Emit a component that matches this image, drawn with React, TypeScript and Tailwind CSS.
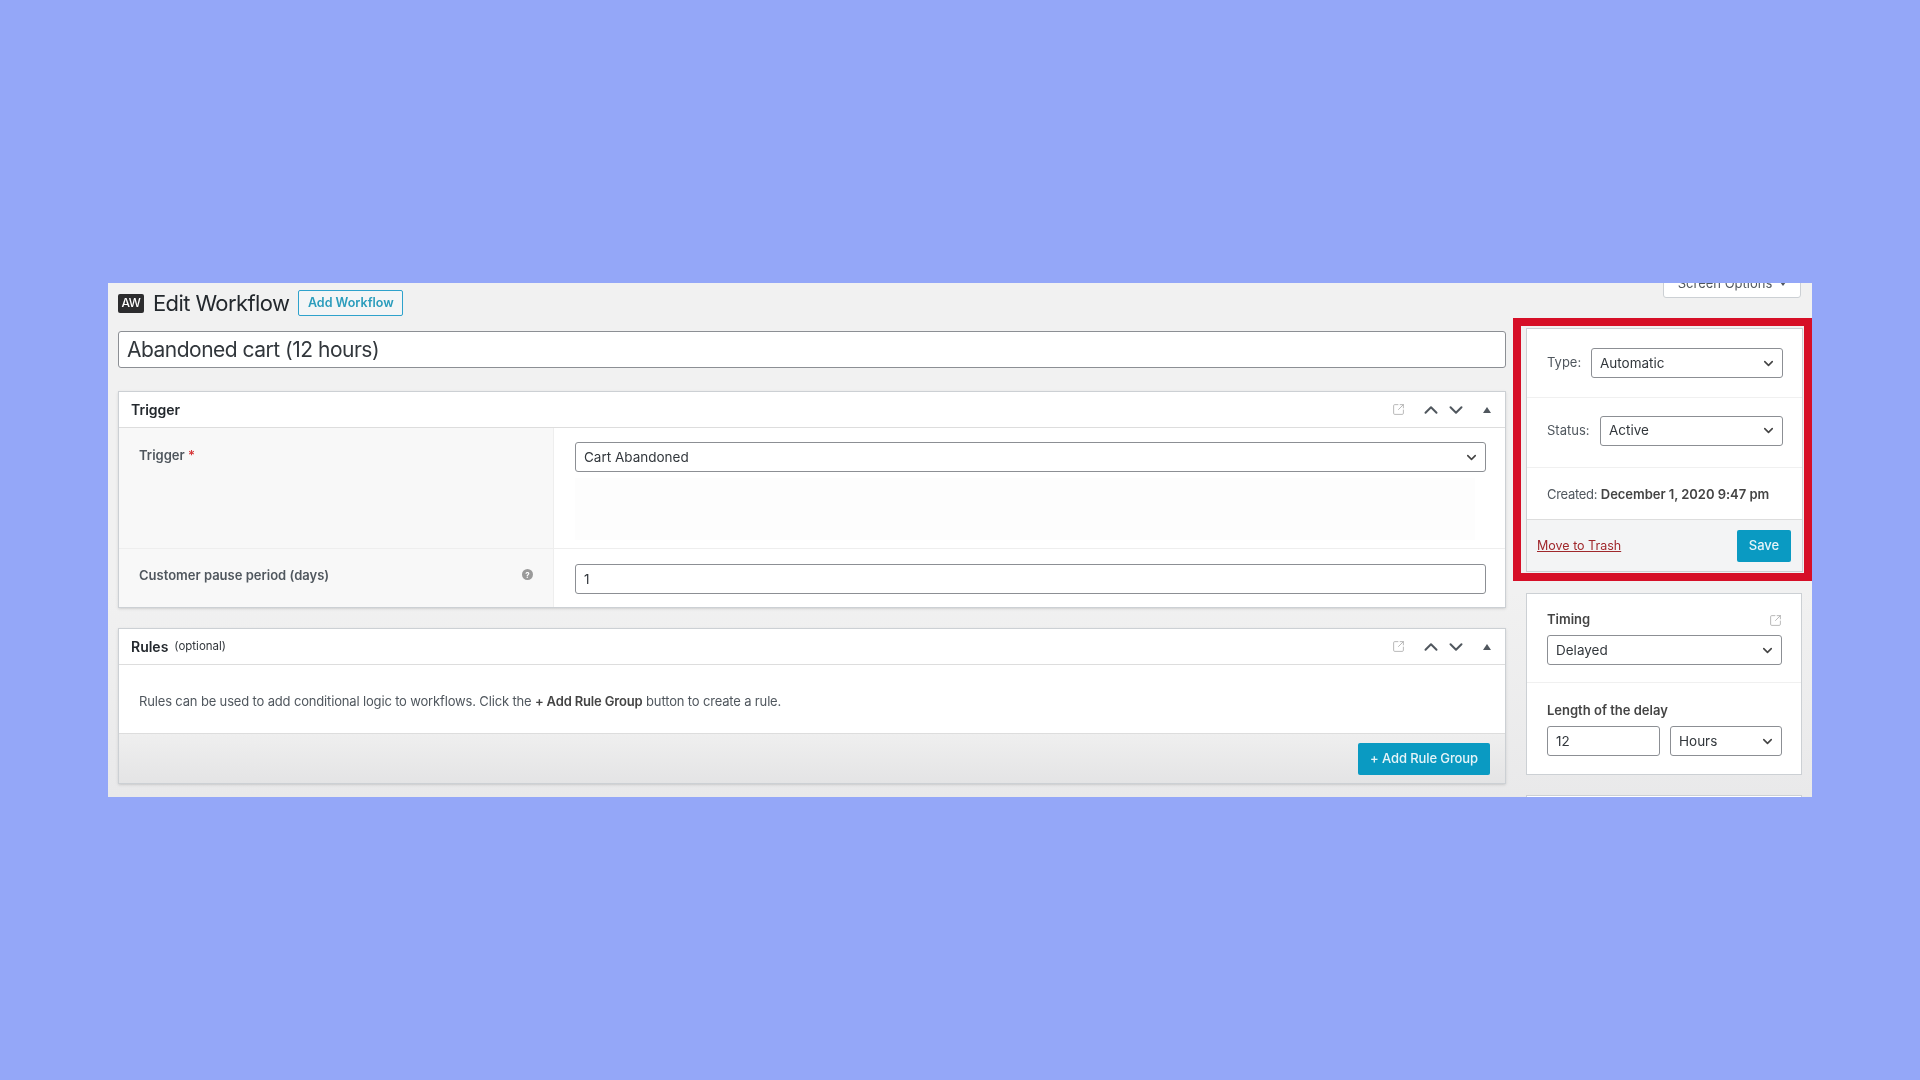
import React from "react";
import { ChevronDown, ChevronUp, SquareArrowOutUpRight } from "lucide-react";

const SelectBox = ({ value, className = "" }: { value: string; className?: string }) => (
  <div className={`flex h-[30px] items-center justify-between rounded-[3px] border border-[#8c8f94] bg-white pl-[8px] pr-[6px] text-[13.5px] text-[#32373c] ${className}`}>
    <span>{value}</span>
    <ChevronDown className="h-[15px] w-[15px] text-[#444]" strokeWidth={2.5} />
  </div>
);

const BoxControls = () => (
  <div className="ml-auto flex items-center">
    <SquareArrowOutUpRight className="mr-[15px] h-[13px] w-[13px] text-[#a9a9a9]" strokeWidth={1.5} />
    <ChevronUp className="mr-[3px] h-[22px] w-[22px] text-[#50575e]" strokeWidth={2.2} />
    <ChevronDown className="h-[22px] w-[22px] text-[#50575e]" strokeWidth={2.2} />
    <div className="ml-[16px] mr-[14px] h-0 w-0 border-x-[4px] border-b-[6px] border-x-transparent border-b-[#50575e]" />
  </div>
);

const HelpIcon = () => (
  <div className="flex h-[11px] w-[11px] items-center justify-center rounded-full bg-[#9a9a9a] text-[8px] font-bold leading-none text-white">
    ?
  </div>
);

export default function App() {
  return (
    <div className="flex h-screen w-full items-center justify-center bg-[#94a7f8] font-['Inter',sans-serif]">
      <div className="flex h-[514px] w-[1704px] overflow-hidden bg-gradient-to-b from-[#f1f1f1] from-60% to-[#e9e9ea] blur-[0.3px]">
        {/* main column */}
        <div className="ml-[10px] w-[1388px] shrink-0 pt-[7px]">
          <div className="flex h-[26px] items-center">
            <div className="flex h-[19px] w-[26px] items-center justify-center rounded-[2px] bg-[#2c2c2e] text-[12px] font-medium tracking-tight text-white">
              AW
            </div>
            <h1 className="ml-[9px] text-[22px] leading-none tracking-[-0.6px] text-[#23282d]">Edit Workflow</h1>
            <div className="ml-[9px] flex h-[26px] w-[105px] items-center justify-center rounded-[2px] border border-[#2ea2cc] bg-[#f3f5f6] text-[12.5px] font-semibold text-[#2a9cbc]">
              Add Workflow
            </div>
          </div>

          <div className="mt-[15px] flex h-[37px] items-center rounded-[3px] border border-[#8c8f94] bg-white pl-[8px] text-[21px] tracking-[-0.5px] text-[#32373c]">
            Abandoned cart (12 hours)
          </div>

          {/* trigger box */}
          <div className="mt-[23px] h-[217px] border border-[#ccd0d4] bg-white shadow-sm">
            <div className="flex h-[36px] items-center border-b border-[#ddd] pl-[12px]">
              <span className="text-[14px] font-semibold text-[#23282d]">Trigger</span>
              <BoxControls />
            </div>
            <div className="flex h-[121px] border-b border-[#eee]">
              <div className="w-[435px] shrink-0 border-r border-[#eee] bg-[#f8f8f8] pl-[20px] pt-[21px] text-[13px] font-semibold leading-none text-[#50575e]">
                Trigger <span className="text-[#d63638]">*</span>
              </div>
              <div className="flex-1 pl-[21px] pr-[19px] pt-[14px]">
                <SelectBox value="Cart Abandoned" />
                <div className="mt-[6px] h-[62px] w-[900px] bg-[#fdfdfd]" />
              </div>
            </div>
            <div className="flex h-[58px]">
              <div className="flex w-[435px] shrink-0 items-start justify-between border-r border-[#eee] bg-[#f8f8f8] pl-[20px] pr-[20px] pt-[20px] text-[13px] font-semibold leading-none text-[#50575e]">
                <span>Customer pause period (days)</span>
                <HelpIcon />
              </div>
              <div className="flex-1 pl-[21px] pr-[19px] pt-[15px]">
                <div className="flex h-[30px] items-center rounded-[3px] border border-[#8c8f94] bg-white pl-[8px] text-[13.5px] text-[#32373c]">
                  1
                </div>
              </div>
            </div>
          </div>

          {/* rules box */}
          <div className="mt-[20px] h-[156px] border border-[#ccd0d4] bg-white shadow-sm">
            <div className="flex h-[36px] items-center border-b border-[#ddd] pl-[12px]">
              <span className="text-[14px] font-semibold text-[#23282d]">Rules</span>
              <span className="ml-[6px] text-[11.5px] text-[#32373c]">(optional)</span>
              <BoxControls />
            </div>
            <div className="flex h-[68px] items-center pl-[20px] pt-[6px] text-[13px] tracking-[-0.16px] text-[#50575e]">
              <p>
                Rules can be used to add conditional logic to workflows. Click the{" "}
                <strong className="font-semibold text-[#444]">+ Add Rule Group</strong> button to create a rule.
              </p>
            </div>
            <div className="flex h-[50px] items-center justify-end border-t border-[#ddd] bg-gradient-to-b from-[#efefef] to-[#e4e4e5] pr-[15px]">
              <div className="flex h-[32px] w-[132px] items-center justify-center rounded-[2px] bg-[#0a9ac2] text-[13px] font-medium tracking-[-0.1px] text-[#e6f4f8]">
                + Add Rule Group
              </div>
            </div>
          </div>
        </div>

        {/* side column */}
        <div className="ml-[7px] flex w-[299px] shrink-0 flex-col">
          <div className="-mt-[15px] mr-[11px] flex h-[30px] w-[138px] shrink-0 items-center justify-center self-end rounded-b-[3px] border border-[#ccd0d4] bg-white pt-[2px] text-[13px] text-[#50575e]">
            Screen Options
            <span className="ml-[8px] h-0 w-0 border-x-[3px] border-t-[4px] border-x-transparent border-t-[#50575e]" />
          </div>

          <div className="mt-[20px] h-[263px] shrink-0 border-[8px] border-[#d60f27] pb-[1px] pl-[5px] pr-[1px] pt-[2px]">
            <div className="flex h-full flex-col border border-[#ccd0d4] bg-white text-[13px] text-[#50575e]">
              <div className="flex h-[69px] items-center justify-between border-b border-[#f0f0f0] pl-[20px] pr-[19px]">
                <span>Type:</span>
                <SelectBox value="Automatic" className="w-[192px]" />
              </div>
              <div className="flex h-[70px] items-center justify-between border-b border-[#f0f0f0] pb-[4px] pl-[20px] pr-[19px]">
                <span>Status:</span>
                <SelectBox value="Active" className="w-[183px]" />
              </div>
              <div className="flex h-[51px] items-center pl-[20px] pt-[2px] tracking-[-0.04px]">
                <span>
                  <span className="tracking-[-0.3px]">Created:</span>{" "}
                  <strong className="font-semibold text-[#444]">December 1, 2020 9:47 pm</strong>
                </span>
              </div>
              <div className="flex flex-1 items-center justify-between border-t border-[#ddd] bg-[#f3f4f5] pl-[10px] pr-[11px] pt-[1px]">
                <span className="text-[12.5px] text-[#a0282c] underline">Move to Trash</span>
                <div className="flex h-[32px] w-[54px] items-center justify-center rounded-[2px] bg-[#0a9ac2] text-[13px] font-medium text-[#e6f4f8]">
                  Save
                </div>
              </div>
            </div>
          </div>

          <div className="ml-[13px] mr-[10px] mt-[12px] h-[182px] shrink-0 border border-[#ccd0d4] bg-white">
            <div className="h-[89px] border-b border-[#f0f0f0] pl-[20px] pr-[19px] pt-[18px]">
              <div className="flex h-[16px] items-center justify-between text-[13px] font-semibold text-[#444]">
                <span>Timing</span>
                <SquareArrowOutUpRight className="h-[13px] w-[13px] text-[#a9a9a9]" strokeWidth={1.5} />
              </div>
              <SelectBox value="Delayed" className="mt-[7px]" />
            </div>
            <div className="pl-[20px] pr-[19px] pt-[20px]">
              <div className="flex h-[16px] items-center text-[13px] font-semibold text-[#444]">Length of the delay</div>
              <div className="mt-[7px] flex gap-[10px]">
                <div className="flex h-[30px] w-[113px] items-center rounded-[3px] border border-[#8c8f94] bg-white pl-[8px] text-[13.5px] text-[#32373c]">
                  12
                </div>
                <SelectBox value="Hours" className="flex-1" />
              </div>
            </div>
          </div>

          <div className="ml-[13px] mr-[10px] mt-[20px] h-[20px] shrink-0 border border-[#ccd0d4] bg-white" />
        </div>
      </div>
    </div>
  );
}
